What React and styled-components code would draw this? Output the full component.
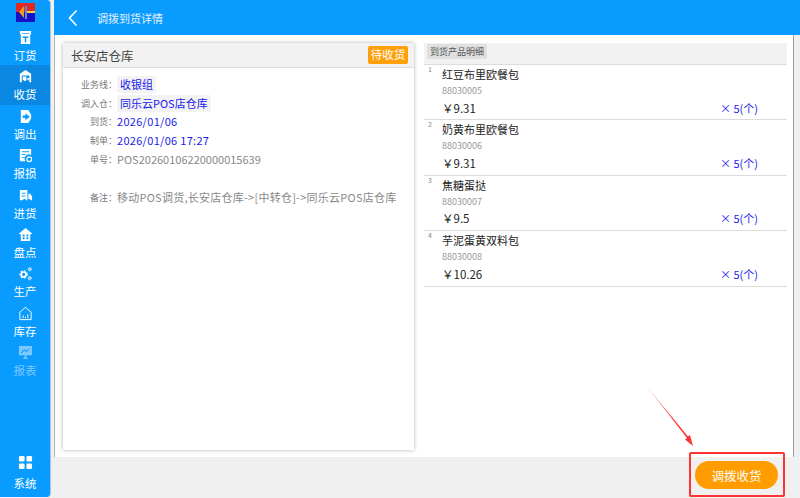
import React from "react";
import styled, { createGlobalStyle } from "styled-components";

const GlobalStyle = createGlobalStyle`
  html, body { margin: 0; padding: 0; background: #f0f0f0; }
  body { font-family: "Noto Sans CJK SC", "Open Sans", sans-serif; }
  * { box-sizing: border-box; }
`;

const Page = styled.div`
  position: relative;
  display: flex;
  width: 800px;
  height: 498px;
  overflow: hidden;
  background: #f0f0f0;
`;

const Sidebar = styled.nav`
  display: flex;
  flex-direction: column;
  width: 51px;
  height: 497px;
  padding: 3px 0 4px;
  background: #0a9bff;
  border-right: 1px solid #9cc9ea;
  border-radius: 0 4px 4px 0;
`;

const Logo = styled.svg`
  display: block;
  width: 19px;
  height: 19px;
  margin: 0 0 4px 16px;
`;

const NavItem = styled.div`
  display: flex;
  flex-direction: column;
  align-items: center;
  gap: ${(p) => (p.$bottom ? "6px" : "3px")};
  height: 39.4px;
  padding-top: ${(p) => (p.$bottom ? "1px" : "4px")};
  margin-top: ${(p) => (p.$bottom ? "auto" : "0")};
  color: #fff;
  background: ${(p) => (p.$active ? "#0a87e0" : "transparent")};
  opacity: ${(p) => (p.$muted ? 0.45 : 1)};
`;

const NavIcon = styled.svg`
  display: block;
  flex: none;
  width: 15px;
  height: 15px;
  fill: #fff;
  fill-rule: evenodd;
`;

const NavLabel = styled.span`
  font-size: 11.5px;
  line-height: 15px;
`;

const Main = styled.div`
  display: flex;
  flex-direction: column;
  flex: 1;
  margin-left: 3px;
`;

const TopBar = styled.header`
  display: flex;
  align-items: center;
  height: 35px;
  padding-left: 14px;
  gap: 19px;
  background: #0a9bff;
  color: #fff;
`;

const BackIcon = styled.svg`
  display: block;
  width: 10px;
  height: 18px;
`;

const Title = styled.h1`
  margin: 0;
  font-size: 11px;
  font-weight: 400;
  color: #e4f3ff;
`;

const Body = styled.div`
  display: flex;
  height: 422px;
  padding: 8px 6px 7px 8px;
  gap: 10px;
  background: #fff;
  border-left: 1px solid #b5b5b5;
  border-right: 1px solid #a0a0a0;
  margin-right: 6px;
  width: 740px;
`;

const InfoCard = styled.section`
  width: 351px;
  height: 407px;
  background: #fff;
  box-shadow: 0 0 4px rgba(0, 0, 0, 0.3);
`;

const InfoHeader = styled.div`
  display: flex;
  align-items: center;
  justify-content: space-between;
  height: 25px;
  padding: 0 6px 0 8px;
  background: #f2f2f2;
  border-bottom: 1px solid #dcdcdc;
`;

const StoreName = styled.span`
  font-size: 12.5px;
  color: #444;
`;

const StatusBadge = styled.span`
  width: 40px;
  height: 18px;
  line-height: 17px;
  text-align: center;
  font-size: 11.5px;
  color: #fff;
  background: #ff9f0a;
  border-radius: 2px;
`;

const InfoList = styled.div`
  display: flex;
  flex-direction: column;
  padding: 7px 0 0 0;
`;

const InfoRow = styled.div`
  display: flex;
  align-items: center;
  height: 19px;
  margin-top: ${(p) => p.$lift || 0};
  margin-bottom: ${(p) => p.$gap || 0};
`;

const InfoLabel = styled.span`
  width: 54px;
  text-align: right;
  font-size: 9px;
  color: #777;
  white-space: nowrap;
`;

const InfoValue = styled.span`
  font-size: 11px;
  white-space: nowrap;
  letter-spacing: ${(p) => p.$spacing || 0};
  color: ${(p) => (p.$plain ? "#888" : "#1a1aee")};
  ${(p) => p.$chip && "background: #f3f3f3; padding: 0 3px; border-radius: 2px; line-height: 17px;"}
`;

const DetailPanel = styled.section`
  flex: 1;
  display: flex;
  flex-direction: column;
`;

const DetailHeader = styled.div`
  display: flex;
  align-items: flex-start;
  height: 22px;
  padding: 1px 0 0 3px;
  background: #f2f2f2;
  border-bottom: 1px solid #dcdcdc;
`;

const DetailTag = styled.span`
  padding: 0 3px;
  font-size: 9px;
  line-height: 15px;
  color: #555;
  background: #dfdfdf;
  border-radius: 2px;
`;

const ProductRow = styled.div`
  position: relative;
  height: 55.4px;
  padding: 1px 29px 0 18px;
  border-bottom: 1px solid #dcdcdc;
`;

const RowIndex = styled.span`
  position: absolute;
  left: 4px;
  top: 0;
  font-size: 7px;
  line-height: 9px;
  color: #888;
`;

const ProductName = styled.div`
  font-size: 11px;
  line-height: 17px;
  color: #222;
`;

const ProductCode = styled.div`
  font-size: 9px;
  line-height: 15px;
  color: #999;
`;

const PriceLine = styled.div`
  display: flex;
  justify-content: space-between;
  margin-top: 1.5px;
  font-size: 11.5px;
  line-height: 17px;
  color: #222;
`;

const Qty = styled.span`
  font-size: 11px;
  color: #1a1aee;
`;

const Footer = styled.footer`
  display: flex;
  justify-content: flex-end;
  flex: 1;
  padding: 4px 22px 0 0;
`;

const ReceiveButton = styled.button`
  width: 83px;
  height: 28px;
  border: 0;
  border-radius: 14px;
  background: #ff9c00;
  color: #fff;
  font: 400 12.5px "Noto Sans CJK SC", sans-serif;
`;

const MarkBox = styled.div`
  position: absolute;
  left: 689px;
  top: 452px;
  width: 96px;
  height: 45px;
  border: 2.5px solid #f33;
  border-radius: 2px;
`;

const MarkArrow = styled.svg`
  position: absolute;
  left: 640px;
  top: 380px;
  width: 60px;
  height: 70px;
`;

const Gear = ({ cx, cy, r, w }) => (
  <g fill="none" stroke="#fff">
    <circle cx={cx} cy={cy} r={r} strokeWidth={w} />
    <circle cx={cx} cy={cy} r={r + w * 0.7} strokeWidth={w * 0.7} strokeDasharray={`${w} ${w}`} />
  </g>
);

const icons = {
  order: <path d="M2 1h12v3l-1 1v10H3V5L2 4zM4 3.500v.8h8v-.8zM5 7v1.500h2.200V13h1.600V8.500H11V7z" />,
  receive: <path d="M8 1l6 4v9h-2V7H4v7H2V5zM5 8h4v4H8.500a1 1 0 0 1-2 0H5zM10 9.500h1.500l1 1.500v1h-2.500z" />,
  transfer: <path d="M3 1h8l3 5v4l-3 5H3zM8 4.500V7H5v2.500h3V12l4.500-3.800z" />,
  damage: (
    <>
      <path d="M2 1h12v6.500a4.500 4.500 0 0 0-6 6.500H2zM4 3.500v1h8v-1zM4 6.500v1h4v-1zM4 9.500v1h3v-1z" />
      <circle cx="12" cy="12" r="2.500" fill="none" stroke="#fff" strokeWidth="1.200" />
    </>
  ),
  stock: <path d="M2 2h8v11H8.500a1.600 1.600 0 0 0-3.200 0H2zM4 5v1h4V5zM4 8v1h4V8zM11 6h2l2 3v4h-1.500a1.600 1.600 0 0 0-2.500-1z" />,
  count: <path d="M8 1l7 6-1.200 1L13 7.500V15H3V7.500L2.200 8 1 7zM5 8v2h2V8zM9 8v2h2V8zM5 11v2h2v-2zM9 11v2h2v-2z" />,
  production: (
    <>
      <Gear cx={6} cy={9} r={2.6} w={1.8} />
      <Gear cx={12.500} cy={3.500} r={1.200} w={1} />
      <Gear cx={12.500} cy={13} r={1.200} w={1} />
    </>
  ),
  inventory: (
    <g fill="none" stroke="#fff">
      <path d="M8 1.500l6 5v8H2v-8zM5.500 10v3M8 11.500V13M10.500 9v4" />
    </g>
  ),
  report: <path d="M1 1h14v10H9v2l2 2H5l2-2v-2H1zM3 8l1 .8 3-3 2 2 3.500-3.500-.7-.6L9 6.500l-2-2-4 3.500z" />,
  system: (
    <>
      <rect x="1" y="1" width="6" height="6" rx="1.500" />
      <rect x="9" y="1" width="6" height="6" rx="1.500" />
      <rect x="1" y="9" width="6" height="6" rx="1.500" />
      <rect x="9" y="9" width="6" height="6" rx="1.500" />
    </>
  ),
};

const items = [
  { label: "订货", icon: "order" },
  { label: "收货", icon: "receive", active: true },
  { label: "调出", icon: "transfer" },
  { label: "报损", icon: "damage" },
  { label: "进货", icon: "stock" },
  { label: "盘点", icon: "count" },
  { label: "生产", icon: "production" },
  { label: "库存", icon: "inventory" },
  { label: "报表", icon: "report", muted: true },
  { label: "系统", icon: "system", bottom: true },
];

const products = [
  { name: "红豆布里欧餐包", code: "88030005", price: "9.31" },
  { name: "奶黄布里欧餐包", code: "88030006", price: "9.31" },
  { name: "焦糖蛋挞", code: "88030007", price: "9.5" },
  { name: "芋泥蛋黄双料包", code: "88030008", price: "10.26" },
];

export default function App() {
  return (
    <Page>
      <GlobalStyle />
      <Sidebar>
        <Logo viewBox="0 0 19 19">
          <rect width="19" height="19" fill="#1a10c8" />
          <rect width="19" height="9" fill="#e02a20" />
          <rect x="10" y="8" width="9" height="2" fill="#f6d84a" />
          <path d="M8 3L3 9l5 6z" fill="#f29a1e" />
          <rect x="9" y="3" width="2" height="13" fill="#5b8cc8" />
        </Logo>
        {items.map((it) => (
          <NavItem key={it.label} $active={it.active} $muted={it.muted} $bottom={it.bottom}>
            <NavIcon viewBox="0 0 16 16">{icons[it.icon]}</NavIcon>
            <NavLabel>{it.label}</NavLabel>
          </NavItem>
        ))}
      </Sidebar>
      <Main>
        <TopBar>
          <BackIcon viewBox="0 0 10 18">
            <path d="M8.500 1.500L1.500 9l7 7.500" fill="none" stroke="#fff" strokeWidth="1.600" />
          </BackIcon>
          <Title>调拨到货详情</Title>
        </TopBar>
        <Body>
          <InfoCard>
            <InfoHeader>
              <StoreName>长安店仓库</StoreName>
              <StatusBadge>待收货</StatusBadge>
            </InfoHeader>
            <InfoList>
              <InfoRow>
                <InfoLabel>业务线：</InfoLabel>
                <InfoValue $chip>收银组</InfoValue>
              </InfoRow>
              <InfoRow>
                <InfoLabel>调入仓：</InfoLabel>
                <InfoValue $chip>同乐云POS店仓库</InfoValue>
              </InfoRow>
              <InfoRow $lift="-1.5px">
                <InfoLabel>到货：</InfoLabel>
                <InfoValue $spacing="0.3px">2026/01/06</InfoValue>
              </InfoRow>
              <InfoRow>
                <InfoLabel>制单：</InfoLabel>
                <InfoValue $spacing="0.3px">2026/01/06 17:27</InfoValue>
              </InfoRow>
              <InfoRow $gap="19px">
                <InfoLabel>单号：</InfoLabel>
                <InfoValue $plain>POS20260106220000015639</InfoValue>
              </InfoRow>
              <InfoRow>
                <InfoLabel>备注：</InfoLabel>
                <InfoValue $plain $spacing="0.25px">移动POS调货,长安店仓库-&gt;[中转仓]-&gt;同乐云POS店仓库</InfoValue>
              </InfoRow>
            </InfoList>
          </InfoCard>
          <DetailPanel>
            <DetailHeader>
              <DetailTag>到货产品明细</DetailTag>
            </DetailHeader>
            {products.map((p, i) => (
              <ProductRow key={p.code}>
                <RowIndex>{i + 1}</RowIndex>
                <ProductName>{p.name}</ProductName>
                <ProductCode>{p.code}</ProductCode>
                <PriceLine>
                  <span>￥{p.price}</span>
                  <Qty>× 5(个)</Qty>
                </PriceLine>
              </ProductRow>
            ))}
          </DetailPanel>
        </Body>
        <Footer>
          <ReceiveButton>调拨收货</ReceiveButton>
        </Footer>
      </Main>
      <MarkArrow viewBox="0 0 60 70">
        <defs>
          <linearGradient id="arrowFade" x1="0" y1="0" x2="1" y2="1">
            <stop offset="0" stopColor="#f33" stopOpacity="0.15" />
            <stop offset="0.6" stopColor="#f33" />
          </linearGradient>
        </defs>
        <path d="M4 3L48 56.500L50 55L53 66L45 59.500L47 58L4 3z" fill="url(#arrowFade)" />
      </MarkArrow>
      <MarkBox />
    </Page>
  );
}
